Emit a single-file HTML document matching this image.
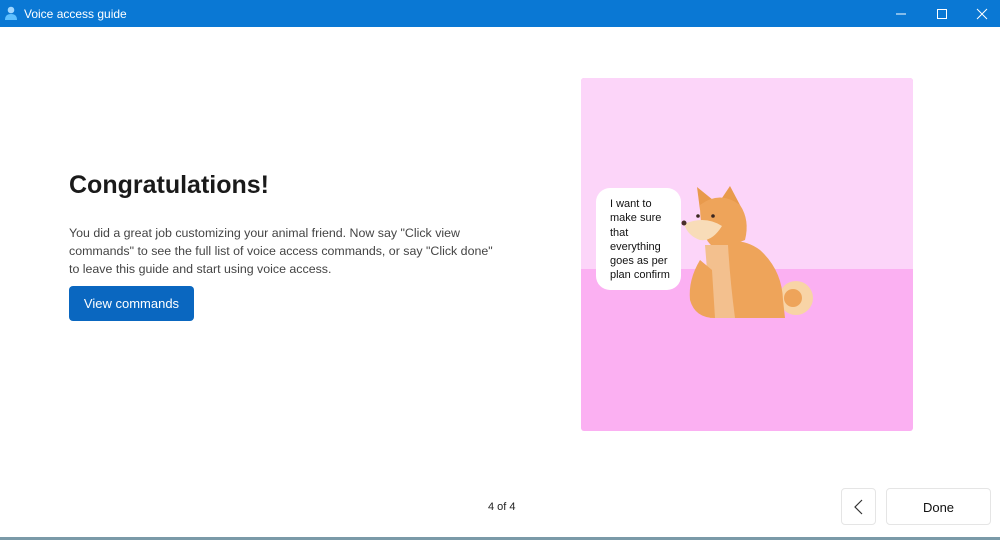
<!DOCTYPE html>
<html><head><meta charset="utf-8"><style>
*{margin:0;padding:0;box-sizing:border-box}
body{width:1000px;height:540px;background:#fff;font-family:"Liberation Sans",sans-serif;position:relative;overflow:hidden}
.tb{position:absolute;left:0;top:0;width:1000px;height:27px;background:#0a78d4;color:#fff;font-size:12px}
.tb .t{position:absolute;left:24px;top:7px}
h1{position:absolute;left:69px;top:171px;font-size:25px;font-weight:bold;color:#1a1a1a}
.p{position:absolute;left:69px;top:224px;width:460px;font-size:12.4px;line-height:18px;color:#444;white-space:nowrap}
.btn{position:absolute;left:69px;top:286px;width:125px;height:35px;background:#0a67c0;border-radius:4px;color:#fff;font-size:13px;text-align:center;line-height:36px}
.img{position:absolute;left:581px;top:78px;width:332px;height:353px;background:#fbb0f2;border-radius:3px;overflow:hidden}
.img .up{position:absolute;left:0;top:0;width:332px;height:191px;background:#fcd5f9}
.bub{position:absolute;left:596px;top:188px;width:85px;height:102px;background:#fff;border-radius:14px;font-size:11px;line-height:14.3px;padding:9px 0 0 14px;color:#111}
.pg{position:absolute;left:488px;top:501px;font-size:11px;color:#222}
.b{position:absolute;top:488px;height:37px;border:1px solid #e5e5e5;border-radius:4px;background:#fff;font-size:13px;text-align:center;line-height:38px;color:#111}
.bl{position:absolute;left:0;top:537px;width:1000px;height:3px;background:#7a9aa8}
</style></head><body>
<div class="tb">
<svg style="position:absolute;left:5px;top:6px" width="14" height="15" viewBox="0 0 14 15"><circle cx="6" cy="4" r="3.3" fill="#9fd6ff"/><path d="M0 14 Q0 8 6 8 Q12 8 12 14Z" fill="#5ec0ff"/></svg>
<span class="t">Voice access guide</span>
<svg style="position:absolute;left:894px;top:8px" width="100" height="12"><path d="M2 6h10" stroke="#fff"/><rect x="43.5" y="1.5" width="9" height="9" fill="none" stroke="#fff"/><path d="M83 1l10 10M93 1l-10 10" stroke="#fff"/></svg>
</div>
<h1>Congratulations!</h1>
<div class="p">You did a great job customizing your animal friend. Now say "Click view<br>commands" to see the full list of voice access commands, or say "Click done"<br>to leave this guide and start using voice access.</div>
<div class="btn">View commands</div>
<div class="img"><div class="up"></div>
<svg style="position:absolute;left:0;top:0" width="332" height="353" viewBox="581 78 332 353">
<circle cx="796" cy="298" r="17" fill="#f8d4a6"/><circle cx="793" cy="298" r="9" fill="#eea45a"/>
<path d="M715 318 L712 245 Q740 235 760 250 Q782 270 783 300 L785 318Z" fill="#eea45a"/>
<path d="M700 210 L697 187 L713 200Z" fill="#e89a4c"/><path d="M722 198 L730 186 L740 205Z" fill="#e89a4c"/>
<path d="M700 205 Q720 190 740 205 Q750 220 745 240 L720 250 Q700 245 700 205Z" fill="#eea45a"/>
<path d="M705 245 Q708 280 710 318 L735 318 Q730 280 728 245Z" fill="#f3c08e"/>
<path d="M700 260 Q688 280 690 300 Q695 318 715 318 L712 270Z" fill="#eea45a"/>
<path d="M684 224 Q705 215 722 226 Q712 242 700 240 Q688 236 684 224Z" fill="#f8dcb8"/>
<circle cx="684" cy="223" r="2.5" fill="#4a2f2a"/><circle cx="698" cy="216" r="1.8" fill="#3a2620"/><circle cx="713" cy="216" r="1.8" fill="#3a2620"/>
</svg>
</div>
<div class="bub">I want to<br>make sure<br>that<br>everything<br>goes as per<br>plan confirm</div>
<div class="pg">4 of 4</div>
<div class="b" style="left:841px;width:35px"><svg width="12" height="16" style="margin-top:10px" viewBox="0 0 12 16"><path d="M9 1L2 8l7 7" fill="none" stroke="#333" stroke-width="1.2"/></svg></div>
<div class="b" style="left:886px;width:105px">Done</div>
<div class="bl"></div>
</body></html>
